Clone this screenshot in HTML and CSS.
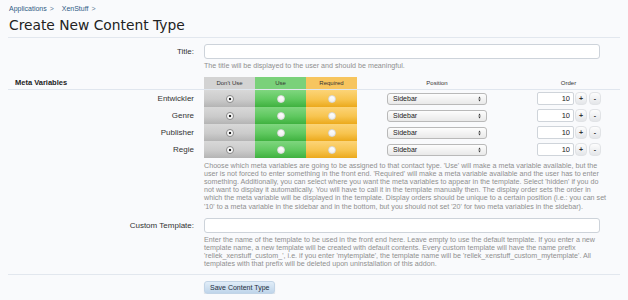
FILE: index.html
```html
<!DOCTYPE html>
<html lang="en">
<head>
  <meta charset="UTF-8">
  <title>Create New Content Type</title>
  <link rel="stylesheet" href="styles.css">
</head>
<body>
  <div class="breadcrumb">
    <a href="#">Applications</a> &gt;
    <a href="#">XenStuff</a> &gt;
  </div>
  <h1 class="pageTitle">Create New Content Type</h1>

  <form class="xenForm">
    <div class="ctrlUnit">
      <label class="ctrlLabel" for="title">Title:</label>
      <div class="ctrlBox">
        <input type="text" id="title" class="textCtrl">
        <p class="explain">The title will be displayed to the user and should be meaningful.</p>
      </div>
    </div>

    <div class="metaTable">
      <div class="metaRow metaHead">
        <div class="metaTitle">Meta Variables</div>
        <div class="cell none">Don't Use</div>
        <div class="cell use">Use</div>
        <div class="cell req">Required</div>
        <div class="colHead">Position</div>
        <div class="colHead">Order</div>
      </div>

      <div class="metaRow">
        <div class="metaName">Entwickler</div>
        <div class="cell none"><input type="radio" name="m1" checked></div>
        <div class="cell use"><input type="radio" name="m1"></div>
        <div class="cell req"><input type="radio" name="m1"></div>
        <div class="posCell"><span class="selectBox">Sidebar<svg class="updown" viewBox="0 0 5 9"><path d="M2.5 0.5 L4.5 3.5 H0.5 Z M2.5 8.5 L4.5 5.5 H0.5 Z"/></svg></span></div>
        <div class="orderCell"><input type="text" class="orderInput" value="10"><button type="button" class="spin">+</button><button type="button" class="spin">-</button></div>
      </div>

      <div class="metaRow">
        <div class="metaName">Genre</div>
        <div class="cell none"><input type="radio" name="m2" checked></div>
        <div class="cell use"><input type="radio" name="m2"></div>
        <div class="cell req"><input type="radio" name="m2"></div>
        <div class="posCell"><span class="selectBox">Sidebar<svg class="updown" viewBox="0 0 5 9"><path d="M2.5 0.5 L4.5 3.5 H0.5 Z M2.5 8.5 L4.5 5.5 H0.5 Z"/></svg></span></div>
        <div class="orderCell"><input type="text" class="orderInput" value="10"><button type="button" class="spin">+</button><button type="button" class="spin">-</button></div>
      </div>

      <div class="metaRow">
        <div class="metaName">Publisher</div>
        <div class="cell none"><input type="radio" name="m3" checked></div>
        <div class="cell use"><input type="radio" name="m3"></div>
        <div class="cell req"><input type="radio" name="m3"></div>
        <div class="posCell"><span class="selectBox">Sidebar<svg class="updown" viewBox="0 0 5 9"><path d="M2.5 0.5 L4.5 3.5 H0.5 Z M2.5 8.5 L4.5 5.5 H0.5 Z"/></svg></span></div>
        <div class="orderCell"><input type="text" class="orderInput" value="10"><button type="button" class="spin">+</button><button type="button" class="spin">-</button></div>
      </div>

      <div class="metaRow">
        <div class="metaName">Regie</div>
        <div class="cell none"><input type="radio" name="m4" checked></div>
        <div class="cell use"><input type="radio" name="m4"></div>
        <div class="cell req"><input type="radio" name="m4"></div>
        <div class="posCell"><span class="selectBox">Sidebar<svg class="updown" viewBox="0 0 5 9"><path d="M2.5 0.5 L4.5 3.5 H0.5 Z M2.5 8.5 L4.5 5.5 H0.5 Z"/></svg></span></div>
        <div class="orderCell"><input type="text" class="orderInput" value="10"><button type="button" class="spin">+</button><button type="button" class="spin">-</button></div>
      </div>
    </div>

    <p class="explain metaExplain">Choose which meta variables are going to be assigned to that contact type. 'Use' will make a meta variable available, but the user is not forced to enter something in the front end. 'Required' will make a meta variable available and the user has to enter something. Additionally, you can select where you want the meta variables to appear in the template. Select 'hidden' if you do not want to display it automatically. You will have to call it in the template manually then. The display order sets the order in which the meta variable will be displayed in the template. Display orders should be unique to a certain position (i.e.: you can set '10' to a meta variable in the sidebar and in the bottom, but you should not set '20' for two meta variables in the sidebar).</p>

    <div class="ctrlUnit customUnit">
      <label class="ctrlLabel" for="template">Custom Template:</label>
      <div class="ctrlBox">
        <input type="text" id="template" class="textCtrl">
        <p class="explain">Enter the name of the template to be used in the front end here. Leave empty to use the default template. If you enter a new template name, a new template will be created with default contents. Every custom template will have the name prefix 'rellek_xenstuff_custom_', i.e. if you enter 'mytemplate', the template name will be 'rellek_xenstuff_custom_mytemplate'. All templates with that prefix will be deleted upon uninstallation of this addon.</p>
      </div>
    </div>

    <div class="submitUnit">
      <button type="submit" class="button">Save Content Type</button>
    </div>
  </form>
</body>
</html>
```

FILE: styles.css
```css
body {
  margin: 0;
  background-color: #f9fafc;
  font-family: "Liberation Sans", Arial, sans-serif;
  color: #333;
}
.breadcrumb {
  height: 14px;
  padding-left: 9px;
  font-size: 7px;
  line-height: 17px;
  color: #5d7a96;
}
.breadcrumb a {
  color: #2f5b85;
  text-decoration: none;
  margin-right: 1px;
}
.breadcrumb a + a {
  margin-left: 6px;
}
.pageTitle {
  margin: 0 8px;
  padding-left: 1px;
  height: 23px;
  font-family: "DejaVu Sans", sans-serif;
  font-size: 13.8px;
  font-weight: normal;
  line-height: 22px;
  color: #222;
  border-bottom: 1px solid #e2e7ee;
}
.xenForm {
  margin: 0 8px;
  padding-top: 6px;
}
.ctrlUnit {
  display: flex;
}
.ctrlLabel {
  width: 186px;
  padding-right: 10px;
  text-align: right;
  font-size: 8px;
  line-height: 15px;
  color: #333;
}
.ctrlBox {
  width: 398px;
}
.textCtrl {
  display: block;
  box-sizing: border-box;
  width: 396px;
  height: 15px;
  margin: 0;
  border: 1px solid #cdd3da;
  border-radius: 3px;
  background: #fff;
}
.explain {
  margin: 3px 0 0;
  font-size: 7.15px;
  line-height: 8.1px;
  color: #8f8f8f;
}

/* meta variables table */
.metaTable {
  margin-top: 7px;
}
.metaRow {
  display: grid;
  grid-template-columns: 196px 51px 51px 51px 160px 103px;
  height: 17px;
}
.metaHead {
  height: 12px;
  border-bottom: 1px solid #e0e6ee;
}
.metaTitle {
  padding-left: 7px;
  font-size: 7.5px;
  font-weight: bold;
  line-height: 12px;
  color: #222;
}
.colHead, .metaHead .cell {
  text-align: center;
  font-size: 6px;
  line-height: 12px;
  color: #333;
}
.metaName {
  padding-right: 10px;
  text-align: right;
  font-size: 8px;
  line-height: 17px;
  color: #333;
}
.cell {
  display: flex;
  align-items: center;
  justify-content: center;
}
.metaHead .cell {
  display: block;
}
.cell.none {
  background: linear-gradient(#d8d8d8, #cbcbcb 55%, #b4b4b4);
}
.cell.use {
  background: linear-gradient(#7fd67f, #5fc85f 55%, #3fb13f);
}
.cell.req {
  background: linear-gradient(#fcd478, #f7c44f 55%, #eba91c);
}
.metaHead .cell.none { background: #d3d3d3; }
.metaHead .cell.use { background: #7ad17a; }
.metaHead .cell.req { background: #f7c55e; }

.cell input[type=radio] {
  appearance: none;
  margin: 0;
  width: 8px;
  height: 8px;
  border-radius: 50%;
  border: 1px solid #a9a9a9;
  background: linear-gradient(#fff, #f0f0f0);
  box-sizing: border-box;
}
.cell.use input[type=radio],
.cell.req input[type=radio] {
  border-color: #d8d8d8;
}
.cell input[type=radio]:checked {
  background: radial-gradient(circle, #222 0, #222 1.3px, #fbfbfb 1.6px);
  border-color: #8a8a8a;
}
.posCell {
  display: flex;
  align-items: center;
  justify-content: center;
}
.selectBox {
  position: relative;
  box-sizing: border-box;
  width: 100px;
  height: 12px;
  padding-left: 5px;
  border: 1px solid #b9b9b9;
  border-radius: 3px;
  background: linear-gradient(#fdfdfd, #e9e9e9);
  font-size: 7px;
  line-height: 10px;
  color: #222;
}
.updown {
  position: absolute;
  right: 5px;
  top: 2px;
  width: 3px;
  height: 6px;
  fill: #333;
}
.orderCell {
  display: flex;
  align-items: center;
  padding-left: 20px;
}
.orderInput {
  box-sizing: border-box;
  width: 37px;
  height: 13px;
  margin: 0 1px 0 0;
  padding: 0 3px 0 0;
  border: 1px solid #cfd4da;
  border-radius: 2px;
  background: #fff;
  text-align: right;
  font-family: "Liberation Sans", Arial, sans-serif;
  font-size: 7.5px;
  color: #222;
}
.spin {
  box-sizing: border-box;
  width: 12px;
  height: 13px;
  margin: 0 2px 0 0;
  padding: 0;
  border: 1px solid #e1e3e6;
  border-radius: 4px;
  background: linear-gradient(#fdfdfd, #e4e6e9);
  font-family: "Liberation Sans", Arial, sans-serif;
  font-size: 7px;
  font-weight: bold;
  line-height: 10px;
  color: #333;
}
.metaExplain {
  margin: 4px 0 0 196px;
  width: 404px;
}
.customUnit {
  margin-top: 7px;
}
.submitUnit {
  margin-top: 6px;
  padding: 6px 0 0 196px;
  border-top: 1px solid #e2e7ee;
}
.button {
  display: block;
  height: 13px;
  padding: 0 5px;
  border: 1px solid #c2d4e6;
  border-radius: 3px;
  background: linear-gradient(#e1edf8, #bfd5ea);
  box-shadow: 0 1px 1px rgba(0, 0, 0, 0.15);
  font-family: "Liberation Sans", Arial, sans-serif;
  font-size: 7px;
  line-height: 11px;
  color: #1f2f40;
}
```
